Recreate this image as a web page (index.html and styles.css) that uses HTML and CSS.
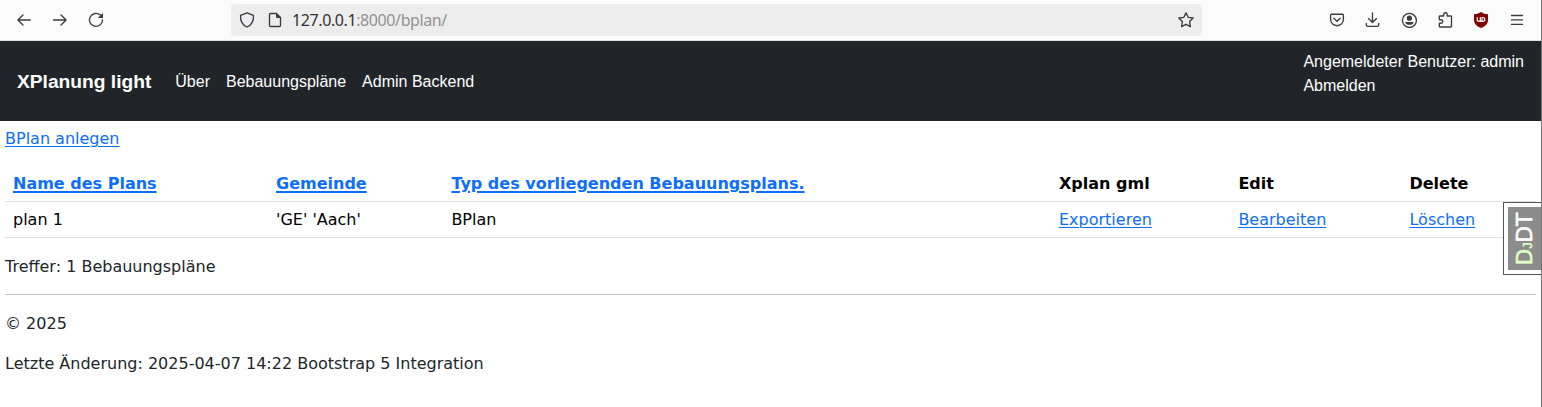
FILE: index.html
```html
<!DOCTYPE html>
<html lang="de">
<head>
<meta charset="utf-8">
<title>XPlanung light</title>
<link rel="stylesheet" href="styles.css">
</head>
<body>
<div class="window">
<header class="toolbar">
  <div class="nav-buttons">
    <svg class="icon" viewBox="0 0 16 16"><path d="M14.300 8H2M7 3L1.900 8L7 13"/></svg>
    <svg class="icon" viewBox="0 0 16 16"><path d="M1.500 8H14M9 3L14.100 8L9 13"/></svg>
    <svg class="icon" viewBox="0 0 16 16"><path d="M12.400 3.100A6.500 6.500 0 1 0 14.500 8"/><path class="solid" d="M15 1V6H9.800Z"/></svg>
  </div>
  <div class="address">
    <svg class="icon" viewBox="0 0 16 16"><path d="M8 .9L14.500 3.400C14.700 8.800 12.400 13.100 8 15C3.600 13.100 1.300 8.800 1.500 3.400Z"/></svg>
    <svg class="icon page-icon" viewBox="0 0 16 16"><path d="M3.500 1.500H9.500L13.500 5.500V13.500Q13.500 14.500 12.500 14.500H3.500Q2.500 14.500 2.500 13.500V2.500Q2.500 1.500 3.500 1.500Z"/><path class="solid" d="M9 1L14 6H10Q9 6 9 5Z"/></svg>
    <span class="url"><b>127.0.0.1</b>:8000/bplan/</span>
    <svg class="icon star" viewBox="0 0 16 16"><path d="M8 .9L10.200 5.300L15.200 6L11.600 9.500L12.400 14.700L8 12.300L3.600 14.700L4.400 9.500L.8 6L5.800 5.300Z"/></svg>
  </div>
  <div class="tools">
    <svg class="icon" viewBox="0 0 16 16"><path d="M2.700 2.200H13.300Q14.400 2.200 14.400 3.300V7.200C14.400 15.900 1.600 15.900 1.600 7.200V3.300Q1.600 2.200 2.700 2.200ZM4.800 6.300L8 9.200L11.200 6.300"/></svg>
    <svg class="icon" viewBox="0 0 16 16"><path d="M7.500 .8V10.500M3.500 6.600L7.500 10.600L11.500 6.600M1.300 11.500V12.700Q1.300 14.300 2.900 14.300H12.100Q13.700 14.300 13.700 12.700V11.500"/></svg>
    <svg class="icon" viewBox="0 0 16 16"><circle cx="8.400" cy="8.400" r="7"/><circle class="solid" cx="8.400" cy="6.200" r="2.600"/><path class="solid" d="M4.100 9.900H12.700C12.100 13.800 4.700 13.800 4.100 9.900Z"/></svg>
    <svg class="icon" viewBox="0 0 16 16"><path d="M2.300 5.200V4.800Q2.300 4 3.100 4H6.700V2.500C6.700 .2 10.200 .2 10.200 2.500V4H13.700Q14.500 4 14.500 4.800V14.300Q14.500 15 13.700 15H3.100Q2.300 15 2.300 14.200V11.200H4C6.300 11.200 6.300 7.700 4 7.700H2.300Z"/></svg>
    <svg class="icon ublock" viewBox="0 0 16 16"><path class="red" d="M8 0Q11 2.200 15 2.200V8C15 12.500 11 14.800 8 16C5 14.800 1 12.500 1 8V2.200Q5 2.200 8 0Z"/><path class="mark" d="M4.200 5.500V7.900Q4.200 9.300 5.700 9.300Q7.300 9.300 7.300 7.900V5.500M7.300 9.300H9.800Q11.800 9.300 11.800 7.400Q11.800 5.500 9.800 5.500H9V9"/></svg>
    <svg class="icon" viewBox="0 0 16 16"><path d="M2.500 3.500H13.500M2.500 7.900H13.500M2.500 12.400H13.500"/></svg>
  </div>
</header>
<nav class="navbar">
  <a class="brand">XPlanung light</a>
  <a>Über</a><a>Bebauungspläne</a><a>Admin Backend</a>
  <div class="user"><span>Angemeldeter Benutzer: admin</span><a>Abmelden</a></div>
</nav>
<main class="content">
  <a class="link" href="#">BPlan anlegen</a>
  <table class="plans">
    <colgroup><col class="c-name"><col class="c-town"><col class="c-type"><col class="c-gml"><col class="c-edit"><col></colgroup>
    <thead><tr><th><a class="link" href="#">Name des Plans</a></th><th><a class="link" href="#">Gemeinde</a></th><th><a class="link" href="#">Typ des vorliegenden Bebauungsplans.</a></th><th>Xplan gml</th><th>Edit</th><th>Delete</th></tr></thead>
    <tbody><tr><td>plan 1</td><td>'GE' 'Aach'</td><td>BPlan</td><td><a class="link" href="#">Exportieren</a></td><td><a class="link" href="#">Bearbeiten</a></td><td><a class="link" href="#">Löschen</a></td></tr></tbody>
  </table>
  <p class="hits">Treffer: 1 Bebauungspläne</p>
  <hr>
  <footer><p>© 2025</p><p>Letzte Änderung: 2025-04-07 14:22 Bootstrap 5 Integration</p></footer>
</main>
<aside class="debug-handle"><div class="debug-label"><span><i>D<small>J</small></i>DT</span></div></aside>
</div>
</body>
</html>
```
FILE: styles.css
```css
* { box-sizing: border-box; }
body { margin: 0; overflow: hidden; background: #fff; color: #212529; font: 16px/24px "DejaVu Sans", sans-serif; }
.window { position: relative; height: 407px; border-right: 1px solid #777; }
.toolbar { display: flex; height: 41px; background: #fbfbfb; border-bottom: 1px solid #dedede; }
.icon { display: block; flex: none; width: 16px; height: 16px; fill: none; stroke: #3c3c40; stroke-width: 1.35; stroke-linejoin: round; stroke-linecap: round; }
.icon .solid { fill: #3c3c40; stroke: none; }
.icon .red { fill: #800000; stroke: none; }
.icon .mark { stroke: #fff; stroke-width: 1.2; }
.nav-buttons { display: flex; gap: 20px; width: 231px; padding: 12px 0 0 16px; }
.address { display: flex; align-items: center; width: 971px; height: 32px; margin-top: 4px; padding: 0 8px; border-radius: 4px; background: #ededed; }
.page-icon { margin-left: 12px; }
.url { margin-left: 9px; font: 16px/22px "Noto Sans", sans-serif; letter-spacing: -0.4px; color: #929292; white-space: nowrap; }
.url b { font-weight: 400; color: #333; }
.star { margin-left: auto; }
.tools { display: flex; gap: 20px; margin: 12px 16px 0 auto; }
.navbar { display: flex; align-items: center; gap: 16px; height: 80px; padding: 2px 17px 0; background: #212529; color: #fff; font-family: "Liberation Sans", sans-serif; }
.brand { margin-right: 8px; font-size: 19.2px; font-weight: 700; }
.user { display: flex; flex-direction: column; height: 64px; margin-left: auto; }
.content { padding: 6px 5px 0; }
.link { color: #0d6efd; text-decoration: underline; text-decoration-thickness: 1px; text-underline-offset: 2px; }
.plans { width: 1531px; margin: 15px 0 17px; table-layout: fixed; border-collapse: separate; border-spacing: 0; color: #000; }
.plans th, .plans td { height: 36px; padding: 6px 8px 5px; text-align: left; border-bottom: 1px solid #dee2e6; }
.plans th .link { text-decoration-thickness: 2px; }
.c-name { width: 263px; }
.c-town { width: 175.400px; }
.c-type { width: 607.600px; }
.c-gml { width: 179.400px; }
.c-edit { width: 171.100px; }
p { margin: 0 0 16px; }
.hits { margin-bottom: 15px; }
hr { margin: 0 0 17px; border: 0; border-top: 1px solid #c7c8c9; }
.debug-handle { position: absolute; top: 202px; right: 0; width: 38px; height: 73px; padding: 4px 0 4px 4px; border: 1px solid #555; border-right: 0; background: #fff; }
.debug-label { display: flex; align-items: center; justify-content: center; height: 63px; padding-left: 2px; background: #8c8c8c; }
.debug-label span { flex: none; transform: rotate(-90deg); font: 21.500px/24px "DejaVu Sans", sans-serif; color: #fff; -webkit-text-stroke: 0.6px currentColor; }
.debug-label i { font-style: normal; color: #dfffc2; }
.debug-label small { font: 12px/14px "Liberation Sans", sans-serif; }
```
